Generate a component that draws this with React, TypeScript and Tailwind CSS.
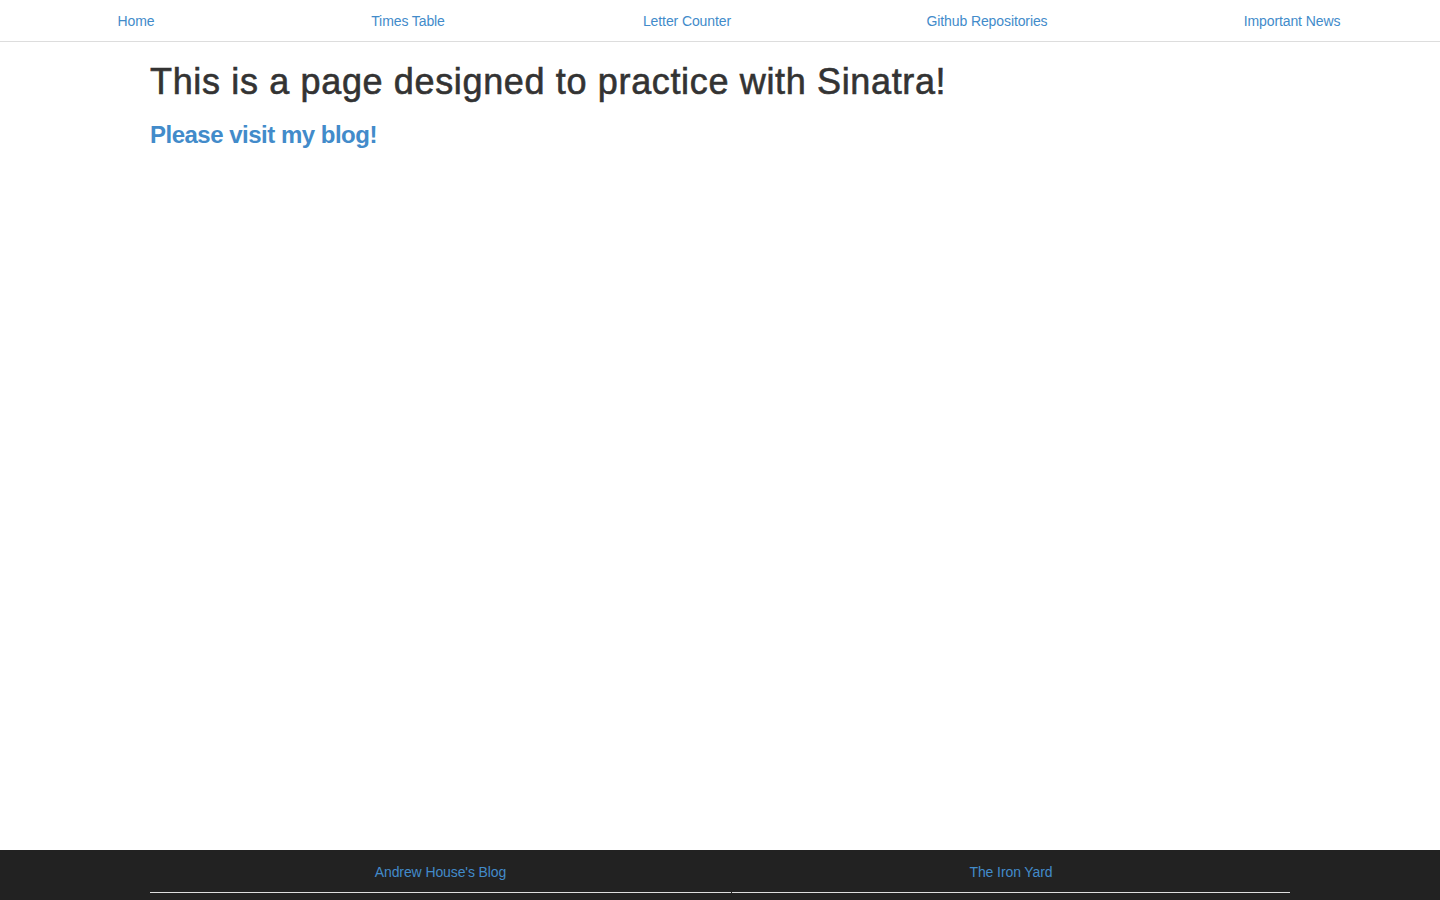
const navLinks = [
  { label: 'Home', width: 'w-[272px]' },
  { label: 'Times Table', width: 'w-[272px]' },
  { label: 'Letter Counter', width: 'w-[286px]' },
  { label: 'Github Repositories', width: 'w-[314px]' },
  { label: 'Important News', width: 'flex-1' },
];

export default function App() {
  return (
    <div
      className="min-h-screen flex flex-col bg-white text-[#333]"
      style={{ fontFamily: '"Liberation Sans", Arial, sans-serif' }}
    >
      {/* top nav */}
      <nav className="flex border-b border-[#ddd]">
        {navLinks.map((link) => (
          <div
            key={link.label}
            className={`${link.width} text-center text-sm leading-5 pt-[11px] pb-[10px]`}
          >
            <a href="#" className="text-[#428bca] tracking-[-0.1px]">
              {link.label}
            </a>
          </div>
        ))}
      </nav>

      <main className="flex-1 w-[1140px] mx-auto">
        {/* medium weight: regular face thickened a little */}
        <h1 className="mt-5 mb-[10px] text-[36px] leading-[1.1] font-normal text-[#333] tracking-[0.65px] [-webkit-text-stroke:0.6px_#333]">
          This is a page designed to practice with Sinatra!
        </h1>
        <a href="#" className="block">
          <h3 className="mt-5 mb-[10px] text-2xl leading-[1.1] font-bold text-[#428bca] tracking-[-0.5px]">
            Please visit my blog!
          </h3>
        </a>
      </main>

      <footer className="h-[50px] bg-[#222]">
        <div className="w-[1140px] mx-auto flex gap-px">
          <div className="w-[581px] text-center text-sm leading-5 pt-3 pb-[10px] border-b border-[#ddd]">
            <a href="#" className="text-[#428bca] tracking-[-0.1px]">
              Andrew House's Blog
            </a>
          </div>
          <div className="flex-1 text-center text-sm leading-5 pt-3 pb-[10px] border-b border-[#ddd]">
            <a href="#" className="text-[#428bca] tracking-[-0.1px]">
              The Iron Yard
            </a>
          </div>
        </div>
      </footer>
    </div>
  );
}
